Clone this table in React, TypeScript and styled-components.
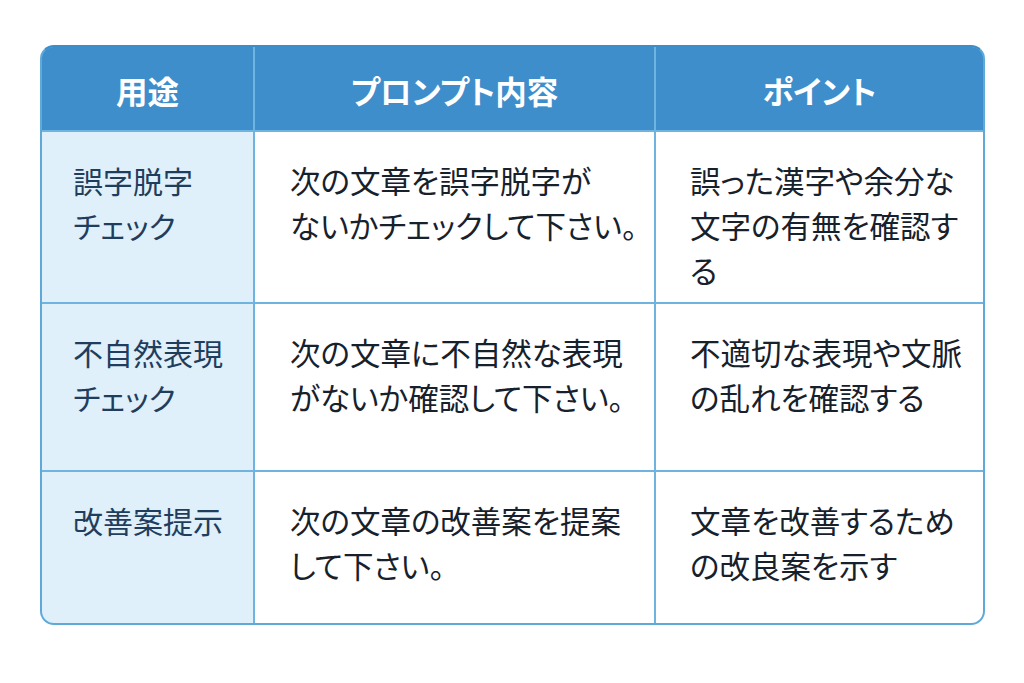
import React from "react";
import styled, { createGlobalStyle } from "styled-components";

const GlobalStyle = createGlobalStyle`
  body {
    margin: 0;
    background: #ffffff;
    font-family: "Noto Sans CJK JP", "Noto Sans", sans-serif;
  }
`;

const rows = [
  {
    use: ["誤字脱字", "チェック"],
    prompt: ["次の文章を誤字脱字が", "ないかチェックして下さい。"],
    point: ["誤った漢字や余分な", "文字の有無を確認す", "る"],
  },
  {
    use: ["不自然表現", "チェック"],
    prompt: ["次の文章に不自然な表現", "がないか確認して下さい。"],
    point: ["不適切な表現や文脈", "の乱れを確認する"],
  },
  {
    use: ["改善案提示"],
    prompt: ["次の文章の改善案を提案", "して下さい。"],
    point: ["文章を改善するため", "の改良案を示す"],
  },
];

function App() {
  return (
    <Page>
      <GlobalStyle />
      <Table>
        <HeadCell>用途</HeadCell>
        <HeadCell>プロンプト内容</HeadCell>
        <HeadCell>ポイント</HeadCell>
        {rows.map((row, i) => (
          <React.Fragment key={i}>
            <UseCell>
              {row.use.map((line) => (
                <Line key={line}>{line}</Line>
              ))}
            </UseCell>
            <BodyCell $pad={35}>
              {row.prompt.map((line) => (
                <Line key={line}>{line}</Line>
              ))}
            </BodyCell>
            <BodyCell $pad={34}>
              {row.point.map((line) => (
                <Line key={line}>{line}</Line>
              ))}
            </BodyCell>
          </React.Fragment>
        ))}
      </Table>
    </Page>
  );
}

const Page = styled.div`
  width: 1024px;
  height: 683px;
  padding: 45px 0 0 40px;
  box-sizing: border-box;
  background: #ffffff;
`;

const Table = styled.div`
  display: grid;
  grid-template-columns: 211px 399px 327px;
  grid-template-rows: 83px 170px 166px 151px;
  gap: 2px;
  width: 945px;
  box-sizing: border-box;
  border: 2px solid #5fa9d9;
  border-top-color: #3d8dcb;
  border-radius: 14px;
  overflow: hidden;
  background: #6fb4e1;
`;

const HeadCell = styled.div`
  display: flex;
  align-items: center;
  justify-content: center;
  background: #3e8ecc;
  color: #ffffff;
  font-size: 31.5px;
  font-weight: 700;
  font-feature-settings: "palt";
  padding-top: 2px;
`;

const BodyCell = styled.div<{ $pad: number }>`
  background: #ffffff;
  color: #17212c;
  font-size: 30.5px;
  line-height: 45px;
  font-feature-settings: "palt";
  padding: 26px 0 0 ${({ $pad }) => $pad}px;
  white-space: nowrap;
`;

const UseCell = styled.div`
  background: #dff0fa;
  color: #1f3e5e;
  font-size: 30px;
  line-height: 45px;
  font-feature-settings: "palt";
  padding: 26px 0 0 31px;
  white-space: nowrap;
`;

const Line = styled.div``;

export default App;
